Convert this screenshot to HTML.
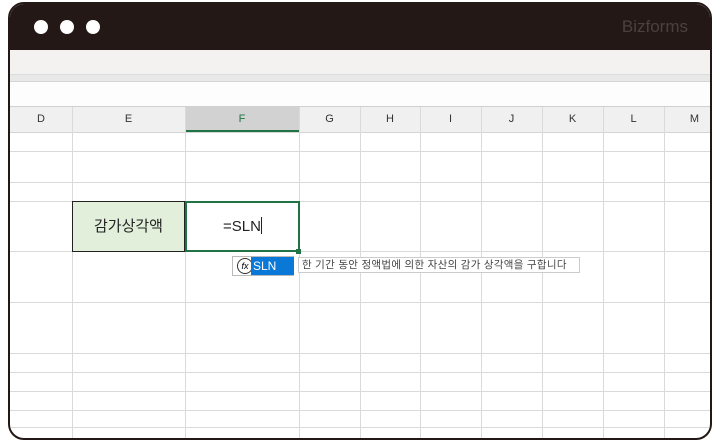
<!DOCTYPE html><html><head><style>
body{margin:0;width:715px;height:440px;background:#fff;overflow:hidden;font-family:"Liberation Sans","Noto Sans CJK KR",sans-serif}
.frame{position:absolute;left:8px;top:2px;width:700px;height:434px;border:2px solid #231815;border-radius:16px;overflow:hidden;background:#fff}
.title{position:absolute;left:0;top:0;right:0;height:46px;background:#231815}
.dot{position:absolute;top:16px;width:14px;height:14px;border-radius:50%;background:#fff}
.logo{position:absolute;right:22px;top:13px;color:#4a403d;font-size:17px}
.tb{position:absolute;left:0;right:0;top:46px;height:24px;background:#f3f2f1;border-bottom:1px solid #ddd}
.tb2{position:absolute;left:0;right:0;top:71px;height:6px;background:#e8e8e8;border-bottom:1px solid #d5d5d5}
.fb{position:absolute;left:0;right:0;top:78px;height:24px;background:#fdfdfd;border-bottom:1px solid #d0d0d0}
.hdr{position:absolute;left:0;right:0;top:103px;height:25px;background:#f0f0f0;border-bottom:1px solid #d4d4d4}
.h{position:absolute;top:103px;height:25px;line-height:25px;text-align:center;font-size:11px;color:#333}
.v{position:absolute;top:103px;bottom:0;width:1px;background:#dadada}
.r{position:absolute;left:0;right:0;height:1px;background:#dadada}
</style></head><body><div class="frame">
<div class="title"><div class="dot" style="left:24px"></div><div class="dot" style="left:50px"></div><div class="dot" style="left:76px"></div><div class="logo">Bizforms</div></div>
<div class="tb"></div><div class="tb2"></div><div class="fb"></div><div class="hdr"></div>
<div style="position:absolute;left:175px;top:103px;width:114px;height:25px;background:#d2d2d2;border-bottom:2px solid #217346;box-sizing:border-box"></div>
<div class="v" style="left:62px"></div><div class="v" style="left:175px"></div><div class="v" style="left:289px"></div><div class="v" style="left:350px"></div><div class="v" style="left:410px"></div><div class="v" style="left:471px"></div><div class="v" style="left:532px"></div><div class="v" style="left:593px"></div><div class="v" style="left:654px"></div>
<div class="h" style="left:0;width:62px">D</div><div class="h" style="left:62px;width:113px">E</div><div class="h" style="left:175px;width:114px;color:#217346">F</div><div class="h" style="left:289px;width:61px">G</div><div class="h" style="left:350px;width:60px">H</div><div class="h" style="left:410px;width:61px">I</div><div class="h" style="left:471px;width:61px">J</div><div class="h" style="left:532px;width:61px">K</div><div class="h" style="left:593px;width:61px">L</div><div class="h" style="left:654px;width:61px">M</div>
<div class="r" style="top:147px"></div><div class="r" style="top:178px"></div><div class="r" style="top:197px"></div><div class="r" style="top:247px"></div><div class="r" style="top:298px"></div><div class="r" style="top:349px"></div><div class="r" style="top:368px"></div><div class="r" style="top:387px"></div><div class="r" style="top:406px"></div><div class="r" style="top:423px"></div>
<div style="position:absolute;left:62px;top:197px;width:113px;height:51px;background:#e2efda;border:1px solid #222;box-sizing:border-box;text-align:center;line-height:49px;font-size:15px;color:#222">감가상각액</div>
<div style="position:absolute;left:175px;top:197px;width:115px;height:51px;background:#fff;border:2px solid #217346;box-sizing:border-box;text-align:center;line-height:47px;font-size:15px;color:#222">=SLN<span style="display:inline-block;width:1px;height:17px;background:#222;vertical-align:-3px"></span></div>
<div style="position:absolute;left:286px;top:245px;width:5px;height:5px;background:#217346"></div>
<div style="position:absolute;left:222px;top:252px;width:62px;height:20px;border:1px solid #bbb;background:#fff;box-sizing:border-box"></div>
<div style="position:absolute;left:227px;top:254px;width:14px;height:14px;border:1px solid #333;border-radius:50%;font-size:9px;line-height:14px;text-align:center;font-style:italic">fx</div>
<div style="position:absolute;left:241px;top:253px;width:43px;height:18px;background:#0a78d7;color:#fff;font-size:12px;line-height:18px;padding-left:2px;box-sizing:border-box">SLN</div>
<div style="position:absolute;left:288px;top:253px;width:282px;height:16px;border:1px solid #ccc;background:#fff;font-size:10.5px;line-height:15px;color:#444;padding-left:3px;box-sizing:border-box;white-space:nowrap;letter-spacing:0.3px">한 기간 동안 정액법에 의한 자산의 감가 상각액을 구합니다</div>
</div></body></html>
